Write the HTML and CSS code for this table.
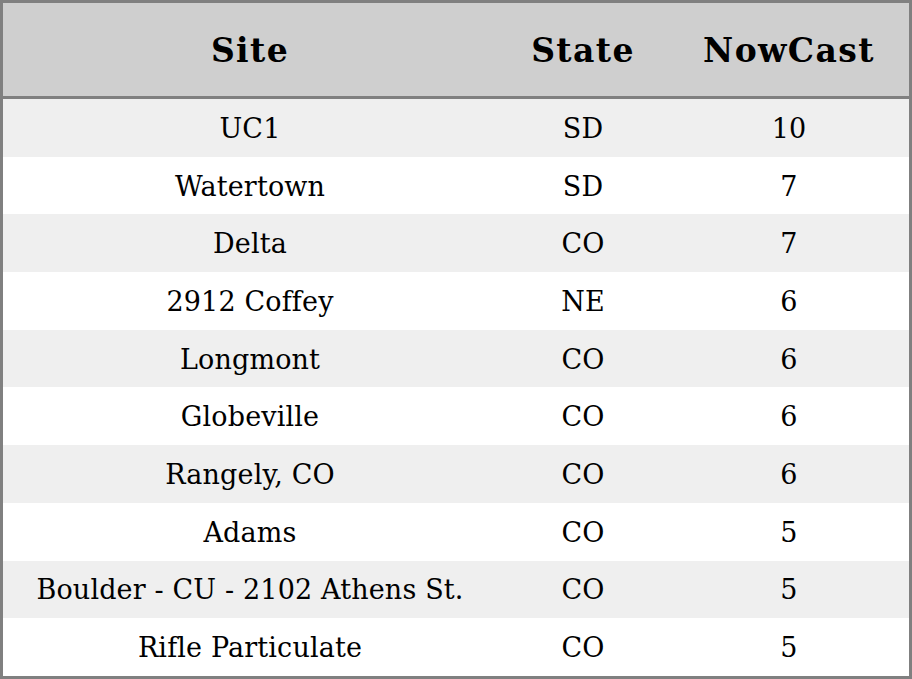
FILE: index.html
```html
<!DOCTYPE html>
<html>
<head>
<meta charset="utf-8">
<link rel="stylesheet" href="styles.css">
</head>
<body>
<table class="aq">
  <colgroup>
    <col class="c-site">
    <col class="c-state">
    <col class="c-now">
  </colgroup>
  <thead>
    <tr><th>Site</th><th>State</th><th>NowCast</th></tr>
  </thead>
  <tbody>
    <tr><td>UC1</td><td>SD</td><td>10</td></tr>
    <tr><td>Watertown</td><td>SD</td><td>7</td></tr>
    <tr><td>Delta</td><td>CO</td><td>7</td></tr>
    <tr><td>2912 Coffey</td><td>NE</td><td>6</td></tr>
    <tr><td>Longmont</td><td>CO</td><td>6</td></tr>
    <tr><td>Globeville</td><td>CO</td><td>6</td></tr>
    <tr><td>Rangely, CO</td><td>CO</td><td>6</td></tr>
    <tr><td>Adams</td><td>CO</td><td>5</td></tr>
    <tr><td>Boulder - CU - 2102 Athens St.</td><td>CO</td><td>5</td></tr>
    <tr><td>Rifle Particulate</td><td>CO</td><td>5</td></tr>
  </tbody>
</table>
</body>
</html>
```

FILE: styles.css
```css
html, body {
  margin: 0;
  padding: 0;
  background: #ffffff;
}
.aq {
  width: 912px;
  height: 679px;
  border-collapse: separate;
  border-spacing: 0;
  border: 3px solid #808080;
  box-sizing: border-box;
  table-layout: fixed;
  font-family: "DejaVu Serif", serif;
  color: #000;
}
.c-site { width: 494px; }
.c-state { width: 172px; }
.c-now { width: 240px; }
.aq th {
  height: 91px;
  background: #cfcfcf;
  border-bottom: 3px solid #808080;
  font-size: 33px;
  letter-spacing: 1.4px;
  font-weight: bold;
  text-align: center;
  vertical-align: middle;
  padding: 2px 0 0 0;
}
.aq td {
  height: 56.7px;
  font-size: 27px;
  letter-spacing: 0.15px;
  text-align: center;
  vertical-align: middle;
  padding: 1px 0 0 0;
}
.aq tbody tr:nth-child(odd) td {
  background: #efefef;
}
```
